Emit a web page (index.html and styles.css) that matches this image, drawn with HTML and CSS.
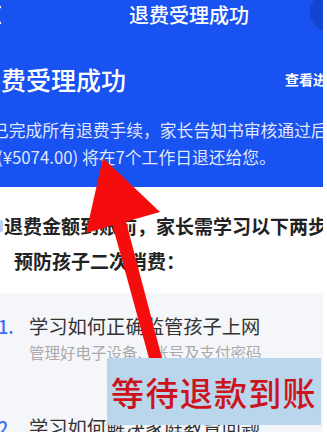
FILE: index.html
```html
<!DOCTYPE html>
<html lang="zh-CN">
<head>
<meta charset="utf-8">
<link rel="stylesheet" href="styles.css">
</head>
<body>
<div class="screen">
  <div class="header">
    <div class="nav">
      <svg class="back" width="12" height="20" viewBox="0 0 12 20"><path d="M10 2 L2 10 L10 18" fill="none" stroke="#fff" stroke-width="2.4" stroke-linecap="round" stroke-linejoin="round"/></svg>
      <div class="nav-title">退费受理成功</div>
    </div>
    <div class="capsule"></div>
    <div class="title-row">
      <div class="big-title">费受理成功</div>
      <div class="link">查看进度</div>
    </div>
    <div class="desc">
      <div class="desc-line l1">已完成所有退费手续，家长告知书审核通过后</div>
      <div class="desc-line l2">(¥5074.00) 将在7个工作日退还给您。</div>
    </div>
  </div>
  <div class="tips">
    <div class="tips-line t1"><span class="mark"></span>退费金额到账前，家长需学习以下两步</div>
    <div class="tips-line t2">预防孩子二次消费：</div>
  </div>
  <div class="panel">
    <div class="item">
      <div class="num">1.</div>
      <div class="body">
        <div class="item-title">学习如何正确监管孩子上网</div>
        <div class="item-sub">管理好电子设备、账号及支付密码</div>
      </div>
    </div>
    <div class="item item2">
      <div class="num">2.</div>
      <div class="body">
        <div class="item-title">学习如何解决家庭教育问题</div>
      </div>
    </div>
  </div>
  <svg class="arrow" width="327" height="432" viewBox="0 0 327 432">
    <polygon points="103,158 86,233 160,212" fill="#f50d0d"/>
    <polygon points="110,216 124,214 163,362 150,362" fill="#f50d0d"/>
  </svg>
  <div class="label">等待退款到账</div>
</div>
</body>
</html>
```
FILE: styles.css
```css
* { box-sizing: border-box; }
html, body { margin: 0; padding: 0; }
body {
  width: 327px;
  height: 432px;
  overflow: hidden;
  background: #ffffff;
  font-family: "Noto Sans CJK SC", "Noto Sans", sans-serif;
}
.screen {
  position: relative;
  width: 323px;
  height: 432px;
  overflow: hidden;
  background: #ffffff;
}
.header {
  background: #1852f1;
  color: #ffffff;
  padding-bottom: 16px;
}
.nav {
  height: 30px;
  display: flex;
  align-items: center;
}
.back {
  margin-left: -10px;
  flex-shrink: 0;
}
.nav-title {
  flex: 1;
  text-align: center;
  font-size: 20px;
  line-height: 30px;
  padding-left: 53px;
  font-weight: 500;
}
.capsule {
  position: absolute;
  top: -8px;
  left: 310px;
  width: 40px;
  height: 40px;
  border-radius: 50%;
  background: rgba(0, 20, 90, 0.22);
}
.title-row {
  margin-top: 34px;
  height: 30px;
  display: flex;
  align-items: center;
  margin-right: -18px;
}
.big-title {
  flex: 1;
  margin-left: 1px;
  font-size: 25px;
  line-height: 30px;
  font-weight: 500;
  white-space: nowrap;
}
.link {
  font-size: 14px;
  font-weight: 700;
  white-space: nowrap;
  line-height: 20px;
}
.desc {
  margin-top: 23px;
  color: rgba(255, 255, 255, 0.88);
  font-size: 16.8px;
  line-height: 27px;
}
.desc-line { white-space: nowrap; }
.l1 { margin-left: -8px; }
.l2 { margin-left: -3px; }
.tips {
  margin-top: 21px;
  color: #222222;
  font-size: 19px;
  font-weight: 700;
  line-height: 35px;
}
.tips-line { white-space: nowrap; }
.t1 { display: flex; align-items: center; }
.mark {
  display: inline-block;
  flex-shrink: 0;
  width: 3px;
  height: 12px;
  background: #bcd0f5;
  border-radius: 0 2px 2px 0;
  margin-right: 1px;
}
.t2 { padding-left: 14px; }
.panel {
  margin-top: 15px;
  background: #f5f6fa;
  padding-top: 20px;
  height: 200px;
}
.item {
  display: flex;
}
.item2 { margin-top: 51px; }
.num {
  width: 29px;
  margin-left: -2px;
  color: #3d6df2;
  font-size: 18px;
  font-weight: 500;
  line-height: 26px;
  flex-shrink: 0;
}
.body { flex: 1; white-space: nowrap; }
.item-title {
  color: #333333;
  font-size: 19.3px;
  line-height: 26px;
  margin-left: 2px;
}
.item-sub {
  margin-top: 2px;
  color: #aaaaaa;
  font-size: 15.5px;
  line-height: 22px;
  margin-left: 2px;
}
.arrow {
  position: absolute;
  top: 0;
  left: 0;
  pointer-events: none;
}
.label {
  position: absolute;
  left: 107px;
  top: 358px;
  width: 214px;
  height: 67px;
  background: #b9d6ec;
  color: #cc141c;
  font-size: 33px;
  font-weight: 500;
  letter-spacing: 1.3px;
  display: flex;
  align-items: center;
  justify-content: center;
  white-space: nowrap;
}
```
